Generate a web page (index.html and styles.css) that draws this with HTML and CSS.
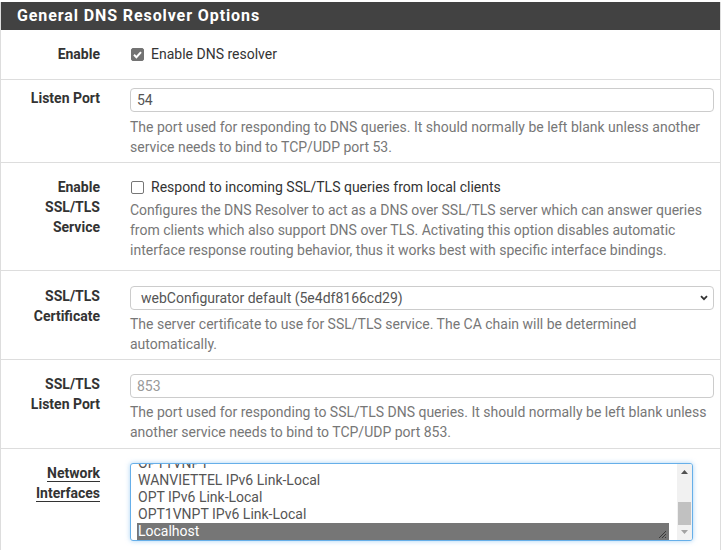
FILE: index.html
```html
<!DOCTYPE html>
<html lang="en">
<head>
<meta charset="utf-8">
<title>DNS Resolver: General Settings</title>
<link rel="stylesheet" href="styles.css">
</head>
<body>
<div class="panel">
  <h2 class="panel-heading">General DNS Resolver Options</h2>
  <div class="panel-body">

    <div class="row row-enable">
      <div class="label">Enable</div>
      <div class="field">
        <label class="check">
          <span class="box box-on">
            <svg width="13" height="13" viewBox="0 0 13 13"><path d="M3 6.8 L5.4 9.2 L10 4.1" fill="none" stroke="#fff" stroke-width="2"/></svg>
          </span>
          Enable DNS resolver
        </label>
      </div>
    </div>

    <div class="row row-port">
      <div class="label">Listen Port</div>
      <div class="field">
        <input class="text-input" type="text" value="54">
        <p class="help">The port used for responding to DNS queries. It should normally be left blank unless another service needs to bind to TCP/UDP port 53.</p>
      </div>
    </div>

    <div class="row row-ssl">
      <div class="label">Enable SSL/TLS Service</div>
      <div class="field">
        <label class="check">
          <span class="box"></span>
          Respond to incoming SSL/TLS queries from local clients
        </label>
        <p class="help help-close">Configures the DNS Resolver to act as a DNS over SSL/TLS server which can answer queries from clients which also support DNS over TLS. Activating this option disables automatic interface response routing behavior, thus it works best with specific interface bindings.</p>
      </div>
    </div>

    <div class="row row-cert">
      <div class="label">SSL/TLS Certificate</div>
      <div class="field">
        <div class="select-box">
          <span>webConfigurator default (5e4df8166cd29)</span>
          <svg width="8" height="6" viewBox="0 0 8 6"><path d="M1 1.2 L4 4.2 L7 1.2" fill="none" stroke="#333" stroke-width="1.8"/></svg>
        </div>
        <p class="help help-mid">The server certificate to use for SSL/TLS service. The CA chain will be determined automatically.</p>
      </div>
    </div>

    <div class="row row-sslport">
      <div class="label">SSL/TLS Listen Port</div>
      <div class="field">
        <input class="text-input" type="text" placeholder="853">
        <p class="help help-mid">The port used for responding to SSL/TLS DNS queries. It should normally be left blank unless another service needs to bind to TCP/UDP port 853.</p>
      </div>
    </div>

    <div class="row row-ifaces">
      <div class="label"><span class="term">Network</span> <span class="term">Interfaces</span></div>
      <div class="field">
        <div class="multi">
          <div class="options">
            <div class="option">OPT1VNPT</div>
            <div class="option">WANVIETTEL IPv6 Link-Local</div>
            <div class="option">OPT IPv6 Link-Local</div>
            <div class="option">OPT1VNPT IPv6 Link-Local</div>
            <div class="option option-on">Localhost</div>
            <svg class="grip" width="9" height="9" viewBox="0 0 9 9"><path d="M8 1 L1 8 M8 4 L4 8 M8 7 L7 8" stroke="#3a3a3a" stroke-width="1"/></svg>
          </div>
          <div class="scrollbar">
            <div class="sb-btn"><svg width="7" height="4" viewBox="0 0 7 4"><path d="M0 4 L3.5 0 L7 4 Z" fill="#505050"/></svg></div>
            <div class="sb-track"><div class="sb-thumb"></div></div>
            <div class="sb-btn sb-down"><svg width="7" height="4" viewBox="0 0 7 4"><path d="M0 0 L7 0 L3.5 4 Z" fill="#a3a3a3"/></svg></div>
          </div>
        </div>
      </div>
    </div>

  </div>
</div>
</body>
</html>
```
FILE: styles.css
```css
* {
  box-sizing: border-box;
}

body {
  margin: 0;
  background: #fff;
  color: #333;
  font-family: Roboto, "Liberation Sans", Arial, sans-serif;
  font-size: 14px;
  line-height: 20px;
}

.panel {
  margin-top: 2px;
  width: 721px;
  border-left: 1px solid #ddd;
  border-right: 1px solid #ddd;
}

.panel-heading {
  margin: 0;
  height: 28px;
  padding-left: 16px;
  background: #424242;
  color: #fff;
  font-size: 16px;
  font-weight: 700;
  letter-spacing: 0.9px;
  line-height: 28px;
}

/* one settings row: label column + field column */
.row {
  display: grid;
  grid-template-columns: 99px 1fr;
  column-gap: 30px;
  padding: 14px 6px 6px 0;
  border-bottom: 1px solid #ddd;
}

.row-enable { padding-bottom: 15px; }
.row-port { padding-top: 8px; padding-bottom: 5px; }
.row-ssl { padding-bottom: 10px; }
.row-cert { padding-top: 15px; padding-bottom: 5px; }
.row-ifaces { border-bottom: none; padding-bottom: 20px; }

.label {
  padding-left: 14px;
  text-align: right;
  font-weight: 700;
  color: #333;
}

.term {
  border-bottom: 1px solid #333;
}

.field {
  min-width: 0;
}

.check {
  display: flex;
  align-items: center;
  gap: 7px;
  height: 20px;
  color: #333;
}

.box {
  display: block;
  width: 13px;
  height: 13px;
  margin-left: 1px;
  border: 1px solid #767676;
  border-radius: 2px;
  background: #fff;
}

.box-on {
  border-color: #737373;
  background: #737373;
}

.box-on svg {
  display: block;
  margin: -1px 0 0 -1px;
}

.text-input {
  display: block;
  width: 100%;
  height: 24px;
  margin: 0;
  padding: 0 6px;
  border: 1px solid #ccc;
  border-radius: 4px;
  background: #fff;
  color: #555;
  font-family: inherit;
  font-size: 14px;
  outline: none;
}

.text-input::placeholder {
  color: #999;
}

.help {
  margin: 5px 0 0;
  color: #777;
}

.help-close { margin-top: 3px; }
.help-mid { margin-top: 4px; }

.select-box {
  display: flex;
  align-items: center;
  justify-content: space-between;
  height: 24px;
  padding: 0 5px 0 10px;
  border: 1px solid #ccc;
  border-radius: 4px;
  color: #555;
}

.select-box svg {
  display: block;
}

/* multiple-choice list, scrolled to its last entry */
.multi {
  display: flex;
  width: 563px;
  height: 78px;
  border: 1px solid #66afe9;
  border-radius: 3px;
  box-shadow: 0 0 5px rgba(102, 175, 233, 0.55);
  background: #fff;
  overflow: hidden;
}

.options {
  position: relative;
  flex: 1;
  display: flex;
  flex-direction: column;
  justify-content: flex-end;
  padding: 0 8px 0 6px;
  overflow: hidden;
}

.option {
  flex: none;
  height: 17px;
  padding-left: 1px;
  line-height: 17px;
  color: #555;
  white-space: nowrap;
}

.option-on {
  background: #767676;
  color: #fff;
}

.grip {
  position: absolute;
  right: 10px;
  bottom: 1px;
}

.scrollbar {
  display: flex;
  flex-direction: column;
  width: 15px;
  background: #f1f1f1;
}

.sb-btn {
  display: flex;
  align-items: center;
  justify-content: center;
  height: 16px;
}

.sb-btn svg {
  display: block;
}

.sb-down {
  height: 14px;
  align-items: flex-start;
  padding-top: 4px;
}

.sb-track {
  flex: 1;
  display: flex;
  flex-direction: column;
  justify-content: flex-end;
  padding: 0 1px 1px 1px;
}

.sb-thumb {
  height: 23px;
  background: #c1c1c1;
}
```
